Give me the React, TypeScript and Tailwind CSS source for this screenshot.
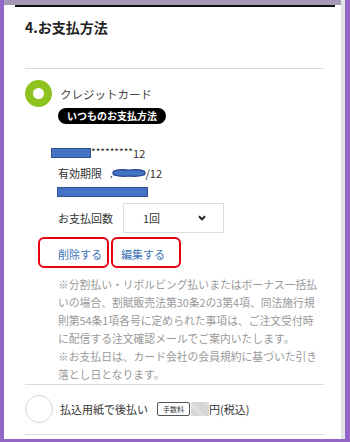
import React from "react";

const noteLines = [
  "※分割払い・リボルビング払いまたはボーナス一括払",
  "いの場合、割賦販売法第30条2の3第4項、同法施行規",
  "則第54条1項各号に定められた事項は、ご注文受付時",
  "に配信する注文確認メールでご案内いたします。",
  "※お支払日は、カード会社の会員規約に基づいた引き",
  "落とし日となります。",
];

export default function App() {
  return (
    <div className="w-[350px] h-[442px] bg-[#9266c6] pl-[4px] pr-[5px] pb-[3px] flex font-['Noto_Sans_CJK_JP',sans-serif]">
      <div className="flex-1 bg-white border-r-[4px] border-[#e1e5e8] flex flex-col overflow-hidden">
        {/* top band */}
        <div className="h-[5px] bg-[#a599b3]" />
        <div className="ml-[11px] w-[320px] h-[2px] bg-[#111]" />

        <div className="pl-[21px] pr-[17px]">
          <h2 className="mt-[10px] text-[14px] leading-[20px] font-bold text-[#222]">
            4.お支払方法
          </h2>

          <div className="mt-[31px] h-px bg-[#d9d9de]" />

          {/* credit card option */}
          <div className="pt-[11px] flex items-center">
            <div className="w-[27px] h-[27px] rounded-full border-[8px] border-[#8dc21f] bg-white shrink-0" />
            <span className="ml-[8px] text-[11.5px] text-[#444] leading-[20px]">
              クレジットカード
            </span>
          </div>
          <div className="ml-[33px] mt-[1px] w-[108px] h-[16px] rounded-full bg-black text-white text-[10px] font-bold flex items-center justify-center leading-none">
            いつものお支払方法
          </div>

          <div className="mt-[19px] h-[20px] flex items-center ml-[26px] text-[11px] text-[#333]">
            <span className="w-[40px] h-[10px] bg-[#4472c4] border border-[#2f528f]" />
            <span className="text-[10px] leading-none -mt-[3px]">*********</span>
            <span className="leading-none">12</span>
          </div>
          <div className="h-[20px] flex items-center ml-[33px] text-[11px] text-[#333]">
            <span>有効期限</span>
            <span className="ml-[8px] text-[9px] leading-none">,</span>
            <svg width="34" height="10" viewBox="0 0 34 10" className="-ml-[1px]">
              <path
                d="M2 3 Q8 1 17 2 Q27 1 32 3 Q34 5 32 7 Q25 9 17 8 Q8 9 2 7 Q0 5 2 3 Z"
                fill="#4472c4"
                stroke="#1f3f8a"
                strokeWidth="1.2"
              />
            </svg>
            <span>/12</span>
          </div>
          <div className="mt-[4px] ml-[32px] w-[91px] h-[10px] bg-[#4472c4] border border-[#2f528f]" />

          <div className="mt-[6px] ml-[33px] flex items-center">
            <span className="w-[65px] text-[11px] text-[#333]">お支払回数</span>
            <div className="w-[101px] h-[30px] border border-[#dcdcdc] flex items-center justify-between pl-[19px] pr-[17px] text-[11px] text-[#333]">
              <span>1回</span>
              <svg width="8" height="6" viewBox="0 0 8 6">
                <path d="M1 1.2 L4 4.4 L7 1.2" fill="none" stroke="#222" strokeWidth="2" />
              </svg>
            </div>
          </div>

          {/* action links, marked in red */}
          <div className="mt-[4px] ml-[13px] flex gap-[2px]">
            <div className="w-[71px] h-[31px] border-[2.5px] border-[#e60012] rounded-[6px] flex items-center pl-[18px] pt-[3px] text-[11px] text-[#3b72b6]">
              削除する
            </div>
            <div className="w-[70px] h-[31px] border-[2.5px] border-[#e60012] rounded-[6px] flex items-center pl-[8px] pt-[3px] text-[11px] text-[#3b72b6]">
              編集する
            </div>
          </div>

          <div className="mt-[7px] ml-[33px] text-[10.8px] leading-[18px] text-[#999] whitespace-nowrap">
            {noteLines.map((l, i) => (
              <div key={i}>{l}</div>
            ))}
          </div>

          <div className="mt-[1px] h-px bg-[#d9d9de]" />

          {/* invoice option */}
          <div className="pt-[10px] flex items-center">
            <div className="w-[28px] h-[28px] rounded-full border border-[#d6d6d6] bg-white shrink-0" />
            <span className="ml-[7px] text-[11px] text-[#333]">払込用紙で後払い</span>
            <span className="ml-[9px] w-[33px] h-[14px] border border-[#555] rounded-[2px] text-[7px] text-[#333] flex items-center justify-center leading-none">
              手数料
            </span>
            <span className="ml-[1px] w-[18px] h-[14px] bg-[#d4d4d4] bg-[repeating-linear-gradient(45deg,#cfcfcf_0px,#cfcfcf_1px,#e4e4e4_1px,#e4e4e4_2px)]" />
            <span className="text-[11px] text-[#333]">円(税込)</span>
          </div>

          <div className="mt-[11px] h-px bg-[#d9d9de]" />
        </div>
      </div>
    </div>
  );
}
